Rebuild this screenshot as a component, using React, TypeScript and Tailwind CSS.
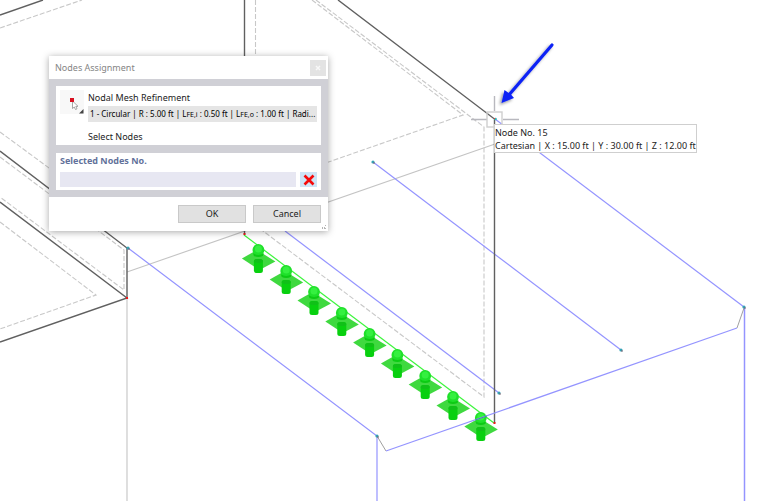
import React from 'react'

const supports = [0, 1, 2, 3, 4, 5, 6, 7, 8]

const endNodes = [
  [128, 248],
  [373, 162],
  [499, 393],
  [621, 350],
  [377, 436],
  [744, 307],
]

function Support({ x, y }: { x: number; y: number }) {
  return (
    <g transform={`translate(${x} ${y})`}>
      <path d="M-16.500 8.500 L-5 2 L5 4 L17 11.500 L1 20 Z" fill="#3fd93f" />
      <circle r="5.9" fill="#1fe02a" />
      <circle cy="-1" r="3.5" fill="#35f040" />
      <path d="M-5.5 3 Q0 7 5.5 3 L4.5 6 Q0 8 -4.5 6 Z" fill="#0ccb14" />
      <rect x="-4.5" y="9" width="9" height="14" rx="2.5" fill="#08d00f" />
      <ellipse cy="11" rx="4.5" ry="2" fill="#10c018" />
    </g>
  )
}

function Model() {
  return (
    <svg
      className="block h-screen w-full"
      viewBox="0 0 760 501"
      preserveAspectRatio="xMinYMin slice"
      fill="none"
      role="img"
      aria-label="Structural model"
    >
      <defs>
        <filter id="arrow-shadow" x="-20%" y="-20%" width="140%" height="150%">
          <feDropShadow dx="-2" dy="2" stdDeviation="1.5" floodColor="#000" floodOpacity="0.4" />
        </filter>
      </defs>

      {/* surface offsets */}
      <g stroke="#c8c8c8" strokeWidth="1.1" strokeDasharray="5 2">
        <path d="M0 28 L82 0" />
        <path d="M255.5 0 V60" />
        <path d="M312 0 L463 115 L320 165" />
        <path d="M316 0 L484 127 V397 L255 225" />
        <path d="M0 132 L60 176" />
        <path d="M0 157 L124 250 V290 L0 197" />
        <path d="M0 222 L96 295 L0 329" />
      </g>

      {/* hidden edges */}
      <g stroke="#c4c4c4" strokeWidth="1.1">
        <path d="M127 272 L495 144" />
        <path d="M127 298 V501" />
      </g>

      {/* beams and lines */}
      <g stroke="#9494ff" strokeWidth="1.2">
        <path d="M128 248 L377 436 V501" />
        <path d="M285 231 L499 393" />
        <path d="M373 162 L621 350" />
        <path d="M495 119 L744 307" />
        <path d="M744.5 308 V501" strokeWidth="1.5" />
      </g>
      <g stroke="#a0a0a0">
        <path d="M377 436 L386 451" />
        <path d="M744 308 L737 328" />
      </g>

      {/* surface edges */}
      <g stroke="#606060" strokeWidth="1.4">
        <path d="M0 15 L43 0" />
        <path d="M244.5 0 V235" />
        <path d="M338 0 L494.5 119 V423" />
        <path d="M0 151 L127 248 V298" />
        <path d="M0 202 L127 298 L0 342" />
      </g>

      <path d="M244 235 L494 423" stroke="#3cf53c" strokeWidth="1.2" />
      {supports.map((i) => (
        <Support key={i} x={258.4 + i * 27.8} y={250 + i * 21} />
      ))}
      <path d="M386 451 L737 328" stroke="#9494ff" strokeWidth="1.2" />
      <path d="M475 420 L487 416" stroke="#4b86a8" />

      {endNodes.map(([x, y]) => (
        <g key={`${x}-${y}`}>
          <circle cx={x} cy={y} r="1.6" fill="#35a3b5" />
          <circle cx={x + 1} cy={y + 1} r="0.8" fill="#7a5a6a" />
        </g>
      ))}
      <g fill="#f01818">
        <rect x="243.5" y="233" width="2" height="2" />
        <rect x="126" y="297" width="2" height="2" />
        <rect x="493.5" y="422" width="2" height="2" />
      </g>

      {/* cursor */}
      <g stroke="#b8b8be" strokeWidth="1.4">
        <path d="M494.5 96 V111 M471 119.5 H487 M503 119.5 H519" />
        <rect x="487" y="112" width="15" height="15" stroke="#cfcfcf" />
      </g>
      <circle cx="495.5" cy="119" r="1.3" fill="#35b5b5" />
      <rect x="494" y="118" width="1" height="1" fill="#f04040" />

      <g filter="url(#arrow-shadow)">
        <path d="M552 45 L508 96" stroke="#0a22f5" strokeWidth="3.2" strokeLinecap="round" />
        <path d="M501.500 103 L504.500 90 L508 92.500 L511 94.500 L514 98 Z" fill="#0a22f5" />
      </g>
    </svg>
  )
}

function NodesDialog() {
  return (
    <section
      aria-labelledby="dialog-title"
      className="absolute top-14 left-[49px] w-[279px] bg-white shadow-[0_1px_7px_rgba(0,0,0,0.35)]"
    >
      <header className="flex h-[23px] items-center justify-between pr-0.5 pl-1.5">
        <h1 id="dialog-title" className="text-[9px] text-[#858585]">
          Nodes Assignment
        </h1>
        <button aria-label="Close" className="flex size-4 items-center justify-center bg-[#e3e3e3]">
          <svg className="size-1.5" viewBox="0 0 6 6" stroke="#f8f8f8" strokeWidth="1.4">
            <path d="M1 1 L5 5 M5 1 L1 5" />
          </svg>
        </button>
      </header>

      <div className="flex flex-col gap-2 bg-[#d0d0d6] p-[7px]">
        <div className="flex h-[59px] gap-1 bg-white p-1">
          <button aria-label="Pick nodes" className="h-6 w-6 bg-[#f8f8f8]">
            <svg className="size-6" viewBox="0 0 24 24">
              <path d="M12.500 11 V18.500 L14.300 17 L15.500 19.500 L17 18.800 L15.800 16.500 L18 16.300 Z" fill="#fff" stroke="#909090" strokeWidth="0.8" />
              <rect x="10" y="8" width="4" height="4" fill="#d81020" />
              <path d="M23.500 19 V23.500 H19 Z" fill="#444" />
            </svg>
          </button>
          <div className="min-w-0 flex-1 text-[9px] leading-[15px] text-[#222]">
            <p>Nodal Mesh Refinement</p>
            <p className="mt-px bg-[#e5e5e5] pl-0.5 text-[8px] leading-[15px] whitespace-nowrap text-black">
              1 - Circular | R : 5.00 ft | L<span className="text-[7px]">FE,i</span> : 0.50 ft | L
              <span className="text-[7px]">FE,o</span> : 1.00 ft | Radi...
            </p>
            <p className="mt-[7px]">Select Nodes</p>
          </div>
        </div>

        <div className="bg-white px-1 pb-[3px]">
          <label htmlFor="nodes" className="block text-[9px] leading-4 font-bold text-[#62719a]">
            Selected Nodes No.
          </label>
          <div className="mt-[3px] flex gap-1">
            <input id="nodes" className="h-[15px] min-w-0 flex-1 bg-[#e7e7f2] px-1 text-[9px] outline-none" />
            <button aria-label="Clear" className="flex h-[15px] w-[17px] items-center justify-center bg-[#cde4f6]">
              <svg className="size-3" viewBox="0 0 12 12" stroke="#f50a0a" strokeWidth="2.6">
                <path d="M1.500 1.500 L10.500 10.500 M10.500 1.500 L1.500 10.500" />
              </svg>
            </button>
          </div>
        </div>
      </div>

      <footer className="flex justify-end gap-[7px] px-[7px] py-2 text-[9px] text-[#222]">
        <button className="h-[18px] w-[68px] border border-[#c9c9c9] bg-[#e1e1e1] leading-4">OK</button>
        <button className="h-[18px] w-[68px] border border-[#c9c9c9] bg-[#e1e1e1] leading-4">Cancel</button>
      </footer>
      <svg className="absolute right-0.5 bottom-0.5 size-1" viewBox="0 0 4 4" fill="#b5b5b5">
        <path d="M3 0h1v1h-1z M0 2h1v2h-1z M2 2h1v2h-1z M3 3h1v1h-1z" />
      </svg>
    </section>
  )
}

export default function App() {
  return (
    <main className="relative min-h-screen overflow-hidden bg-white font-['Noto_Sans',sans-serif]">
      <Model />
      <NodesDialog />
      <div
        role="tooltip"
        className="absolute top-[124px] left-[494px] border border-[#cfcfcf] bg-white pt-px text-[9px] leading-[13px] whitespace-nowrap text-[#222]"
      >
        <p>Node No. 15</p>
        <p>Cartesian | X : 15.00 ft | Y : 30.00 ft | Z : 12.00 ft</p>
      </div>
    </main>
  )
}
